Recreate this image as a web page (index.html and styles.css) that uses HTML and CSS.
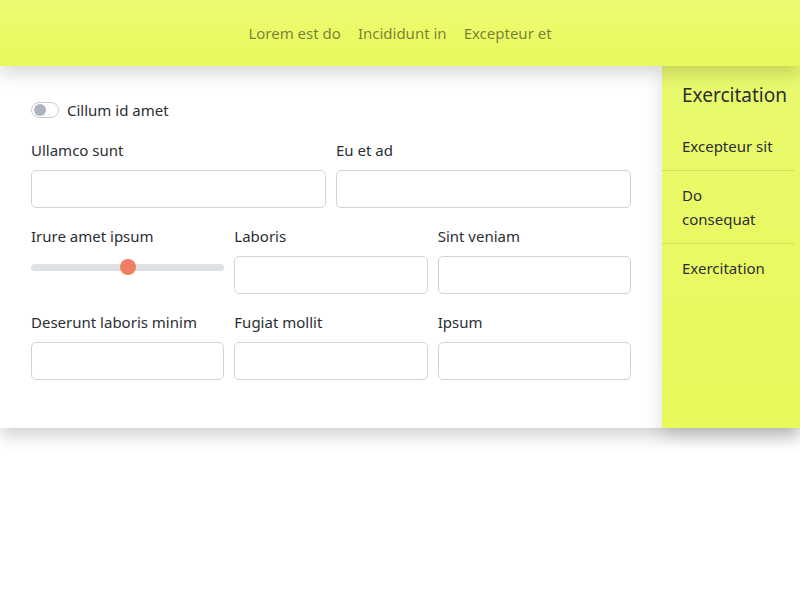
FILE: index.html
```html
<!DOCTYPE html>
<html lang="en">
<head>
<meta charset="utf-8">
<title>Form</title>
<link rel="stylesheet" href="styles.css">
</head>
<body>
<header class="topbar">
  <nav class="nav">
    <a class="nav-link" href="#">Lorem est do</a>
    <a class="nav-link" href="#">Incididunt in</a>
    <a class="nav-link" href="#">Excepteur et</a>
  </nav>
</header>
<main class="panel">
  <section class="form-area">
    <div class="switch-row">
      <span class="switch"><span class="switch-knob"></span></span>
      <span class="switch-label">Cillum id amet</span>
    </div>
    <div class="grid grid-2">
      <div class="field">
        <label class="label">Ullamco sunt</label>
        <input class="input" type="text">
      </div>
      <div class="field">
        <label class="label">Eu et ad</label>
        <input class="input" type="text">
      </div>
    </div>
    <div class="grid grid-3">
      <div class="field">
        <label class="label">Irure amet ipsum</label>
        <input class="range" type="range" min="0" max="100" value="50">
      </div>
      <div class="field">
        <label class="label">Laboris</label>
        <input class="input" type="text">
      </div>
      <div class="field">
        <label class="label">Sint veniam</label>
        <input class="input" type="text">
      </div>
      <div class="field">
        <label class="label">Deserunt laboris minim</label>
        <input class="input" type="text">
      </div>
      <div class="field">
        <label class="label">Fugiat mollit</label>
        <input class="input" type="text">
      </div>
      <div class="field">
        <label class="label">Ipsum</label>
        <input class="input" type="text">
      </div>
    </div>
  </section>
  <aside class="sidebar">
    <h2 class="side-title">Exercitation</h2>
    <ul class="side-list">
      <li class="side-item">Excepteur sit</li>
      <li class="side-item">Do consequat</li>
      <li class="side-item">Exercitation</li>
    </ul>
  </aside>
</main>
</body>
</html>
```
FILE: styles.css
```css
* { box-sizing: border-box; }
html, body { min-height: 100%; }
html { height: 100%; }
body {
  margin: 0;
  font-family: "Noto Sans", "Open Sans", sans-serif;
  font-size: 15px;
  line-height: 24px;
  color: #2a2e33;
  background: #fff;
}
.topbar {
  position: relative;
  z-index: 2;
  height: 66px;
  display: flex;
  align-items: center;
  justify-content: center;
  background: linear-gradient(180deg, #ecfb72 0%, #e8f95b 100%);
  box-shadow: 0 8px 16px rgba(0, 0, 0, 0.15);
}
.nav { display: flex; gap: 1px; }
.nav-link {
  color: rgba(0, 0, 0, 0.5);
  text-decoration: none;
  padding: 0 8px;
}
.panel {
  position: relative;
  z-index: 1;
  display: flex;
  background: #fff;
  box-shadow: 0 8px 16px rgba(0, 0, 0, 0.18);
}
.form-area {
  flex: 1;
  padding: 32px 31px 48px;
  display: flex;
  flex-direction: column;
  gap: 16px;
}
.switch-row { display: flex; align-items: center; gap: 8px; height: 24px; }
.switch {
  width: 28px;
  height: 16px;
  border: 1px solid #c7ccd2;
  border-radius: 8px;
  display: flex;
  align-items: center;
  padding-left: 2px;
}
.switch-knob { width: 12px; height: 12px; border-radius: 50%; background: #adb5bd; }
.grid { display: grid; gap: 16px 10px; }
.grid-2 { grid-template-columns: 1fr 1fr; }
.grid-3 { grid-template-columns: 1fr 1fr 1fr; }
.field { display: flex; flex-direction: column; }
.label { display: block; margin-bottom: 8px; }
.input {
  height: 38px;
  width: 100%;
  border: 1px solid #ced4da;
  border-radius: 5px;
  background: #fff;
  font: inherit;
}
.range {
  -webkit-appearance: none;
  appearance: none;
  width: 100%;
  height: 16px;
  margin: 3px 0 0;
  background: transparent;
}
.range::-webkit-slider-runnable-track {
  height: 7px;
  border-radius: 4px;
  background: #dee2e6;
}
.range::-webkit-slider-thumb {
  -webkit-appearance: none;
  appearance: none;
  width: 16px;
  height: 16px;
  border-radius: 50%;
  background: #ef7e63;
  border: 0;
  margin-top: -4.5px;
}
.sidebar {
  width: 138px;
  flex: none;
  background: linear-gradient(180deg, #e9f96e 0%, #e8f95a 100%);
  box-shadow: 0 8px 16px rgba(0, 0, 0, 0.15);
  padding-top: 18px;
}
.side-title {
  margin: 0 0 15px;
  padding-left: 20px;
  font-size: 19px;
  line-height: 23px;
  font-weight: 400;
}
.side-list { list-style: none; margin: 0 6px 0 0; padding: 0; }
.side-item {
  padding: 12px 20px;
  border-bottom: 1px solid rgba(0, 0, 0, 0.1);
}
.side-item:last-child { border-bottom: 0; }
```
